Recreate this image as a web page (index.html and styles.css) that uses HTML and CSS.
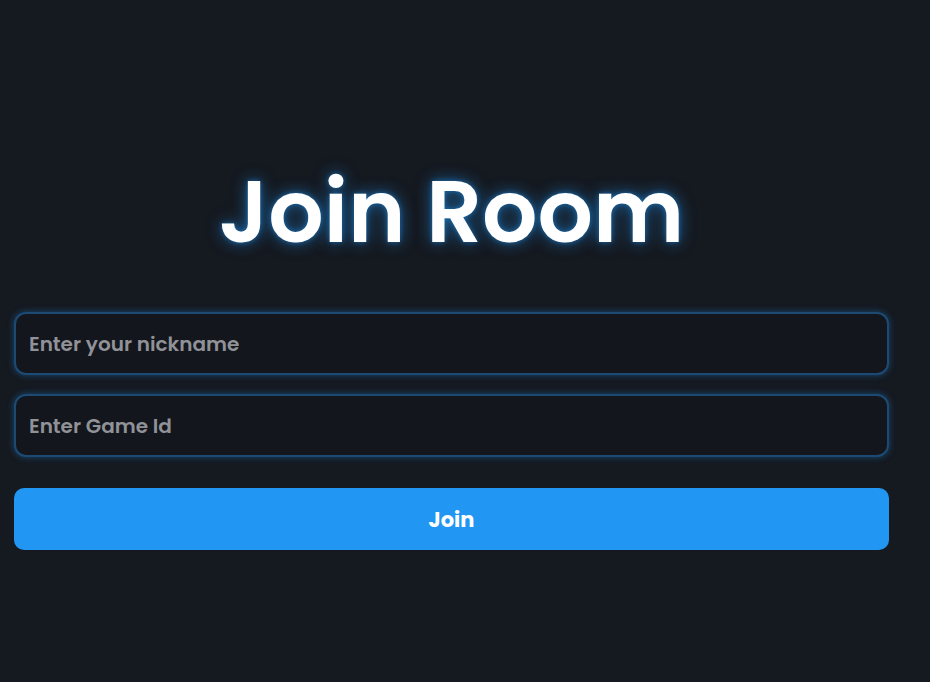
FILE: index.html
```html
<!DOCTYPE html>
<html lang="en">
<head>
<meta charset="utf-8">
<title>Join Room</title>
<link rel="stylesheet" href="styles.css">
</head>
<body>
<main class="page">
  <form class="join-form">
    <h1 class="title">Join Room</h1>
    <input class="field" type="text" placeholder="Enter your nickname">
    <input class="field" type="text" placeholder="Enter Game Id">
    <button class="join-btn" type="button">Join</button>
  </form>
</main>
</body>
</html>
```
FILE: styles.css
```css
html, body {
  margin: 0;
  padding: 0;
  background: #151920;
  height: 100%;
}
body {
  font-family: "Poppins", "Inter", "Noto Sans", sans-serif;
}
.page {
  padding: 0 41px 0 14px;
}
.join-form {
  display: flex;
  flex-direction: column;
  padding-top: 162px;
}
.title {
  margin: 0 0 50px;
  text-align: center;
  color: #ffffff;
  font-size: 87px;
  font-weight: 600;
  line-height: 100px;
  text-shadow: 0 0 5px rgba(33, 150, 243, 0.5), 0 0 16px rgba(33, 150, 243, 0.6);
}
.field {
  box-sizing: border-box;
  height: 63px;
  margin: 0 0 19px;
  padding: 0 13px;
  background: #13161d;
  border: 2px solid #1c4a73;
  border-radius: 12px;
  box-shadow: 0 0 7px rgba(33, 150, 243, 0.4);
  color: #e5e7eb;
  font-family: inherit;
  font-size: 20px;
  font-weight: 600;
  outline: none;
}
.field::placeholder {
  color: #909297;
}
.join-btn {
  height: 62px;
  margin-top: 12px;
  border: none;
  border-radius: 10px;
  background: #2196f3;
  color: #ffffff;
  font-family: inherit;
  font-size: 21px;
  font-weight: 700;
  cursor: pointer;
}
```
